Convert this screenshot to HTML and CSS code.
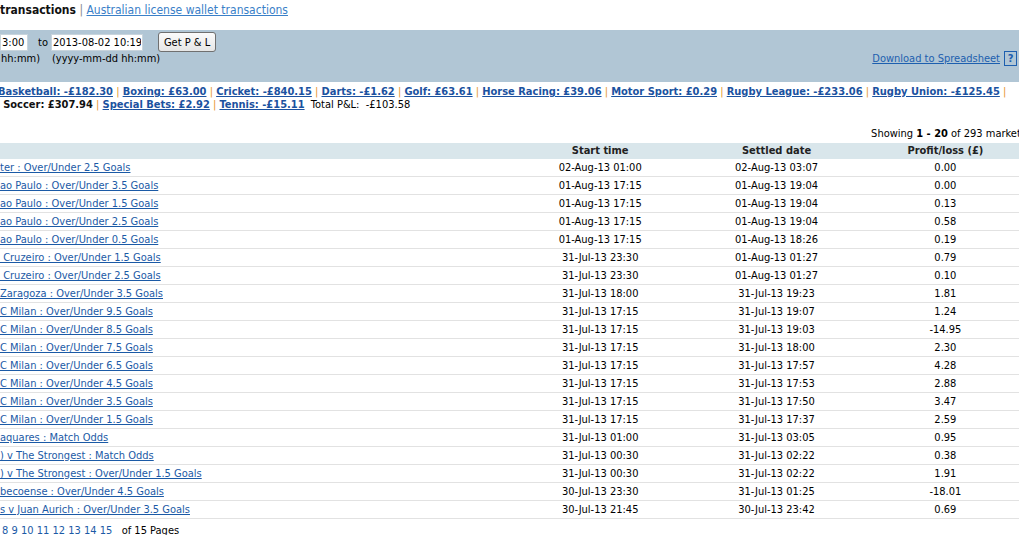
FILE: index.html
```html
<!DOCTYPE html>
<html lang="en">
<head>
  <meta charset="UTF-8" />
  <title>Betting P&amp;L</title>
  <link rel="stylesheet" href="styles.css">
</head>
<body>
<div class="page">

  <!-- TABS -->
  <div class="onglets">
    <b>transactions</b> <span class="sep-gris">|</span> <a href="#" class="lien-clair">Australian license wallet transactions</a>
  </div>

  <!-- FILTRE -->
  <div class="filtre">
    <div class="filtre-gauche">
      <div class="champ champ-1">
        <input type="text" value="3:00" class="date-1" />
        <span class="aide">hh:mm)</span>
      </div>
      <span class="a-label">to</span>
      <div class="champ champ-2">
        <input type="text" value="2013-08-02 10:19" class="date-2" />
        <span class="aide">(yyyy-mm-dd hh:mm)</span>
      </div>
      <button type="button" class="btn">Get P &amp; L</button>
    </div>
    <div class="filtre-droite">
      <a href="#">Download to Spreadsheet </a>
      <span class="aide-box">?</span>
    </div>
  </div>

  <!-- SPORTS -->
  <div class="sports">
    <div class="ligne ligne-1">
      <a href="#">Basketball: -£182.30</a> <i>|</i>
      <a href="#">Boxing: £63.00</a> <i>|</i>
      <a href="#">Cricket: -£840.15</a> <i>|</i>
      <a href="#">Darts: -£1.62</a> <i>|</i>
      <a href="#">Golf: £63.61</a> <i>|</i>
      <a href="#">Horse Racing: £39.06</a> <i>|</i>
      <a href="#">Motor Sport: £0.29</a> <i>|</i>
      <a href="#">Rugby League: -£233.06</a> <i>|</i>
      <a href="#">Rugby Union: -£125.45</a> <i>|</i>
    </div>
    <div class="ligne">
      &nbsp;<b>Soccer: £307.94</b> <i>|</i>
      <a href="#">Special Bets: £2.92</a> <i>|</i>
      <a href="#">Tennis: -£15.11</a>
      <span class="total">&nbsp;Total P&amp;L: &nbsp;-£103.58</span>
    </div>
  </div>

  <div class="compteur">Showing <b>1 - 20</b> of 293 markets</div>

  <!-- MARCHES -->
  <table class="marches">
    <thead>
      <tr>
        <th class="col-nom"></th>
        <th>Start time</th>
        <th>Settled date</th>
        <th>Profit/loss (£)</th>
      </tr>
    </thead>
    <tbody id="lignes"></tbody>
  </table>

  <div class="pages">
    <a href="#">8</a> <a href="#">9</a> <a href="#">10</a> <a href="#">11</a> <a href="#">12</a> <a href="#">13</a> <a href="#">14</a> <a href="#">15</a> &nbsp; of 15 Pages
  </div>

</div>

<script>
  const marches = [
    ["ter : Over/Under 2.5 Goals", "02-Aug-13 01:00", "02-Aug-13 03:07", "0.00"],
    ["ao Paulo : Over/Under 3.5 Goals", "01-Aug-13 17:15", "01-Aug-13 19:04", "0.00"],
    ["ao Paulo : Over/Under 1.5 Goals", "01-Aug-13 17:15", "01-Aug-13 19:04", "0.13"],
    ["ao Paulo : Over/Under 2.5 Goals", "01-Aug-13 17:15", "01-Aug-13 19:04", "0.58"],
    ["ao Paulo : Over/Under 0.5 Goals", "01-Aug-13 17:15", "01-Aug-13 18:26", "0.19"],
    ["\u00a0Cruzeiro : Over/Under 1.5 Goals", "31-Jul-13 23:30", "01-Aug-13 01:27", "0.79"],
    ["\u00a0Cruzeiro : Over/Under 2.5 Goals", "31-Jul-13 23:30", "01-Aug-13 01:27", "0.10"],
    ["Zaragoza : Over/Under 3.5 Goals", "31-Jul-13 18:00", "31-Jul-13 19:23", "1.81"],
    ["C Milan : Over/Under 9.5 Goals", "31-Jul-13 17:15", "31-Jul-13 19:07", "1.24"],
    ["C Milan : Over/Under 8.5 Goals", "31-Jul-13 17:15", "31-Jul-13 19:03", "-14.95"],
    ["C Milan : Over/Under 7.5 Goals", "31-Jul-13 17:15", "31-Jul-13 18:00", "2.30"],
    ["C Milan : Over/Under 6.5 Goals", "31-Jul-13 17:15", "31-Jul-13 17:57", "4.28"],
    ["C Milan : Over/Under 4.5 Goals", "31-Jul-13 17:15", "31-Jul-13 17:53", "2.88"],
    ["C Milan : Over/Under 3.5 Goals", "31-Jul-13 17:15", "31-Jul-13 17:50", "3.47"],
    ["C Milan : Over/Under 1.5 Goals", "31-Jul-13 17:15", "31-Jul-13 17:37", "2.59"],
    ["aquares : Match Odds", "31-Jul-13 01:00", "31-Jul-13 03:05", "0.95"],
    [") v The Strongest : Match Odds", "31-Jul-13 00:30", "31-Jul-13 02:22", "0.38"],
    [") v The Strongest : Over/Under 1.5 Goals", "31-Jul-13 00:30", "31-Jul-13 02:22", "1.91"],
    ["becoense : Over/Under 4.5 Goals", "30-Jul-13 23:30", "31-Jul-13 01:25", "-18.01"],
    ["s v Juan Aurich : Over/Under 3.5 Goals", "30-Jul-13 21:45", "30-Jul-13 23:42", "0.69"]
  ];

  const corps = document.getElementById('lignes');
  marches.forEach(m => {
    const tr = document.createElement('tr');
    tr.innerHTML = `<td class="col-nom"><a href="#">${m[0]}</a></td><td>${m[1]}</td><td>${m[2]}</td><td>${m[3]}</td>`;
    corps.appendChild(tr);
  });
</script>
</body>
</html>
```

FILE: styles.css
```css
html, body {
  margin: 0;
  padding: 0;
  overflow: hidden;
}

body {
  background: #fff;
  color: #000;
  font-family: "DejaVu Sans Condensed", "Liberation Sans", sans-serif;
  font-size: 11px;
}

.page {
  width: 1026px;
}

a {
  color: #1b5aa6;
}

/* tabs */
.onglets {
  height: 30px;
  font-size: 12px;
  line-height: 14px;
  padding-top: 3px;
  box-sizing: border-box;
}

.onglets b {
  color: #111;
}

.sep-gris {
  color: #888;
}

.lien-clair {
  color: #3a80c8;
}

/* filter panel */
.filtre {
  background: #b1c6d5;
  height: 52px;
  display: flex;
  justify-content: space-between;
}

.filtre-gauche {
  display: flex;
  align-items: flex-start;
  padding-top: 4px;
}

.champ {
  display: flex;
  flex-direction: column;
  white-space: nowrap;
}

.champ-1 {
  width: 38px;
}

.champ-2 {
  width: 102px;
}

.champ input {
  font-family: inherit;
  font-size: 11px;
  height: 17px;
  box-sizing: border-box;
  border: 1px solid #c8d4dc;
  padding: 0 1px;
  margin: 0;
}

.date-1 {
  width: 28px;
}

.date-2 {
  width: 92px;
}

.aide {
  margin-top: 1px;
  line-height: 13px;
  padding-left: 1px;
}

.a-label {
  line-height: 17px;
  margin: 0 3px 0 0;
}

.btn {
  font-family: inherit;
  font-size: 11px;
  height: 20px;
  margin: -2px 0 0 5px;
  padding: 0 5px;
  background: linear-gradient(#fbfbfb, #e6e6e6);
  border: 1px solid #707070;
  border-radius: 3px;
  color: #000;
}

.filtre-droite {
  display: flex;
  align-items: center;
  padding: 21px 9px 0 0;
  align-self: flex-start;
}

.filtre-droite a {
  color: #1d5faf;
  font-size: 11px;
}

.aide-box {
  margin-left: 4px;
  border: 1px solid #1d5faf;
  color: #1d5faf;
  font-weight: bold;
  font-size: 11px;
  width: 11px;
  height: 13px;
  line-height: 13px;
  text-align: center;
}

/* sports totals */
.sports {
  padding-top: 3px;
  line-height: 13px;
}

.ligne {
  white-space: nowrap;
}

.ligne-1 {
  text-indent: -2px;
}

.sports a {
  font-weight: bold;
  color: #1b52a0;
}

.sports b {
  color: #111;
}

.sports i {
  font-style: normal;
  color: #e6972f;
}

.total {
  color: #000;
}

.compteur {
  text-align: right;
  line-height: 14px;
  padding: 16px 0 2px 0;
}

/* markets table */
.marches {
  width: 100%;
  border-collapse: collapse;
}

.marches th {
  background: #d9e6eb;
  height: 16px;
  padding: 0;
  line-height: 16px;
  color: #222;
}

.marches td {
  height: 17px;
  padding: 0;
  text-align: center;
  border-bottom: 1px solid #e2e2e2;
  line-height: 17px;
}

.marches td.col-nom {
  text-align: left;
  width: 512px;
}

.marches a {
  color: #1b5aa6;
}

.pages {
  padding: 5px 0 0 2px;
  line-height: 14px;
}
```
